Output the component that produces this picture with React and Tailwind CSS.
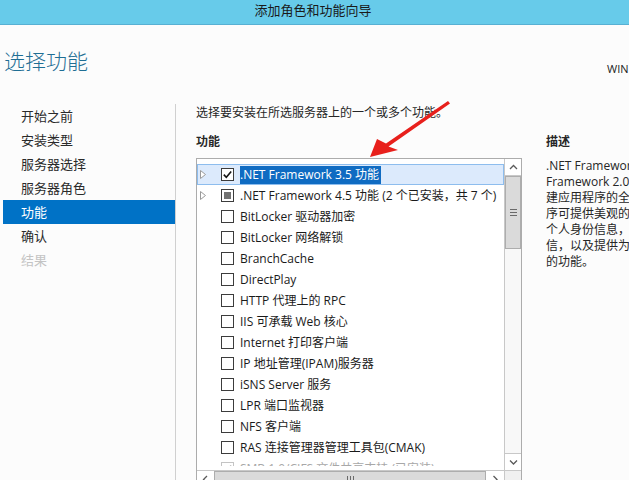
import React from "react";

const rows = [
  { t: ".NET Framework 3.5 功能", exp: true, state: "checked", sel: true },
  { t: ".NET Framework 4.5 功能 (2 个已安装，共 7 个)", exp: true, state: "ind" },
  { t: "BitLocker 驱动器加密" },
  { t: "BitLocker 网络解锁" },
  { t: "BranchCache" },
  { t: "DirectPlay" },
  { t: "HTTP 代理上的 RPC" },
  { t: "IIS 可承载 Web 核心" },
  { t: "Internet 打印客户端" },
  { t: "IP 地址管理(IPAM)服务器" },
  { t: "iSNS Server 服务" },
  { t: "LPR 端口监视器" },
  { t: "NFS 客户端" },
  { t: "RAS 连接管理器管理工具包(CMAK)" },
  { t: "SMB 1.0/CIFS 文件共享支持 (已安装)", state: "checked", disabled: true },
];

const nav = ["开始之前", "安装类型", "服务器选择", "服务器角色", "功能", "确认", "结果"];

function Expander() {
  return (
    <svg width="6" height="9" viewBox="0 0 6 9" className="shrink-0">
      <polygon points="0.5,0.5 5.5,4.5 0.5,8.5" fill="#ffffff" stroke="#9a9a9a" strokeWidth="1" />
    </svg>
  );
}

function Checkbox({ state, disabled }) {
  const border = disabled ? "border-[#c4c4c4]" : "border-[#3c3c3c]";
  return (
    <div className={`w-[13px] h-[13px] shrink-0 border ${border} bg-white flex items-center justify-center`}>
      {state === "checked" && (
        <svg width="11" height="11" viewBox="0 0 11 11">
          <path d="M1.8 5.6 L4.3 8.2 L9.2 2.4" fill="none" stroke={disabled ? "#b8b8b8" : "#141414"} strokeWidth="1.6" />
        </svg>
      )}
      {state === "ind" && <div className="w-[7px] h-[7px] bg-[#727272]" />}
    </div>
  );
}

function Chevron({ dir }) {
  const paths = {
    up: "M1 5 L4.5 1.5 L8 5",
    down: "M1 1.5 L4.5 5 L8 1.5",
    left: "M5 1 L1.5 4.5 L5 8",
    right: "M1.5 1 L5 4.5 L1.5 8",
  };
  const vertical = dir === "up" || dir === "down";
  return (
    <svg width={vertical ? 9 : 7} height={vertical ? 7 : 9} viewBox={vertical ? "0 0 9 7" : "0 0 7 9"}>
      <path d={paths[dir]} fill="none" stroke="#5a5a5a" strokeWidth="1.3" />
    </svg>
  );
}

export default function App() {
  const latin = "font-['Open_Sans','Noto_Sans_CJK_SC',sans-serif]";
  return (
    <div className="relative w-[629px] h-[480px] overflow-hidden bg-[#fcfcfc] font-['Noto_Sans_CJK_SC',sans-serif] text-[#1e1e1e]">
      {/* Title bar */}
      <div className="h-[25px] bg-[#67cbea] border-b border-[#58b0d3] flex items-center justify-center pb-[4px]">
        <span className="text-[13px] leading-[16px] text-[#1a1a1a] ml-[-3px]">添加角色和功能向导</span>
      </div>

      {/* Header */}
      <div className="h-[79px] flex items-start justify-between">
        <div className="pl-[4px] pt-[19px] text-[21px] leading-[32px] font-light text-[#1f6e94]">选择功能</div>
        <div className={`pt-[37px] text-[11px] leading-[14px] text-[#222] ${latin} w-[22px] whitespace-nowrap overflow-visible`}>WIN</div>
      </div>

      {/* Body */}
      <div className="flex h-[376px]">
        {/* Nav */}
        <div className="w-[176px] shrink-0 border-r border-[#d0d0d0] pl-[3px]">
          {nav.map((n, i) => (
            <div
              key={n}
              className={`h-[24px] flex items-center pl-[18px] text-[13px] leading-[16px] ${
                i === 4 ? "bg-[#0072c6] text-white" : i === 6 ? "text-[#c4c4c4]" : "text-[#2a2a2a]"
              }`}
            >
              {n}
            </div>
          ))}
        </div>

        {/* Main */}
        <div className="flex pl-[20px]">
          <div className="w-[326px] shrink-0">
            <div className="h-[16px] text-[12px] leading-[16px] whitespace-nowrap text-[#262626]">
              选择要安装在所选服务器上的一个或多个功能。
            </div>
            <div className="mt-[13px] h-[16px] text-[12px] leading-[16px] font-bold text-[#262626]">功能</div>

            {/* List box */}
            <div className="mt-[9px] w-[326px] h-[340px] border border-[#acacac] bg-white flex flex-col">
              <div className="flex h-[311px]">
                <div className="w-[307px]">
                  <div className={`h-[307px] overflow-hidden pt-[5px] ${latin}`}>
                    {rows.map((r, i) => (
                      <div
                        key={i}
                        className={`h-[21px] flex items-center pl-[2px] border whitespace-nowrap text-[12px] ${
                          r.sel ? "bg-[#dceafc] border-[#8dbdee]" : "border-transparent"
                        }`}
                      >
                        <div className="w-[6px] shrink-0">{r.exp && <Expander />}</div>
                        <div className="ml-[15px]">
                          <Checkbox state={r.state} disabled={r.disabled} />
                        </div>
                        <span
                          className={`ml-[6px] leading-[18px] ${
                            r.sel ? "bg-[#0f6bc2] text-white pr-[2px]" : r.disabled ? "text-[#a8a8a8]" : "text-[#1a1a1a]"
                          }`}
                        >
                          {r.t}
                        </span>
                      </div>
                    ))}
                  </div>
                </div>
                {/* Vertical scrollbar */}
                <div className="w-[17px] shrink-0 border-l border-[#c8c8c8] flex flex-col bg-[#f8f8f8]">
                  <div className="h-[17px] bg-white border-b border-[#c8c8c8] flex items-center justify-center">
                    <Chevron dir="up" />
                  </div>
                  <div className="h-[73px] bg-[#dadada] border border-[#adadad] flex flex-col items-center justify-center gap-[2px]">
                    <div className="w-[7px] h-[1px] bg-[#6a6a6a]" />
                    <div className="w-[7px] h-[1px] bg-[#6a6a6a]" />
                    <div className="w-[7px] h-[1px] bg-[#6a6a6a]" />
                  </div>
                  <div className="flex-1" />
                  <div className="h-[17px] bg-white border-t border-[#c8c8c8] flex items-center justify-center">
                    <Chevron dir="down" />
                  </div>
                </div>
              </div>
              {/* Horizontal scrollbar */}
              <div className="flex h-[18px] border-t border-[#c8c8c8] bg-[#f8f8f8]">
                <div className="w-[17px] flex items-center justify-center bg-white">
                  <Chevron dir="left" />
                </div>
                <div className="w-[272px] bg-[#dadada] border border-[#adadad] flex items-center justify-center gap-[2px]">
                  <div className="w-[1px] h-[7px] bg-[#6a6a6a]" />
                  <div className="w-[1px] h-[7px] bg-[#6a6a6a]" />
                  <div className="w-[1px] h-[7px] bg-[#6a6a6a]" />
                </div>
                <div className="w-[18px] flex items-center justify-center bg-white">
                  <Chevron dir="right" />
                </div>
                <div className="w-[17px] border-l border-[#c8c8c8] bg-[#f0f0f0]" />
              </div>
            </div>
          </div>

          {/* Description */}
          <div className="ml-[24px] w-[200px] shrink-0">
            <div className="mt-[29px] h-[16px] text-[12px] leading-[16px] font-bold text-[#262626]">描述</div>
            <div className={`mt-[9px] text-[12px] leading-[16px] text-[#262626] whitespace-nowrap ${latin}`}>
              <div>.NET Framework 3.5 将 .NET</div>
              <div>Framework 2.0 API 的强大功能与用于构</div>
              <div>建应用程序的全新技术相结合，这些应用程</div>
              <div>序可提供美观的用户界面，保护客户的</div>
              <div>个人身份信息，实现顺畅而安全的通</div>
              <div>信，以及提供为一系列业务进程建模</div>
              <div>的功能。</div>
            </div>
          </div>
        </div>
      </div>

      {/* Red annotation arrow */}
      <svg className="absolute left-[360px] top-[95px]" width="100" height="70" viewBox="0 0 100 70">
        <polygon points="88,6 90,8.5 28.5,51.5 38,55 10,62 17,44 26,48.5" fill="#e8201c" />
      </svg>
    </div>
  );
}
